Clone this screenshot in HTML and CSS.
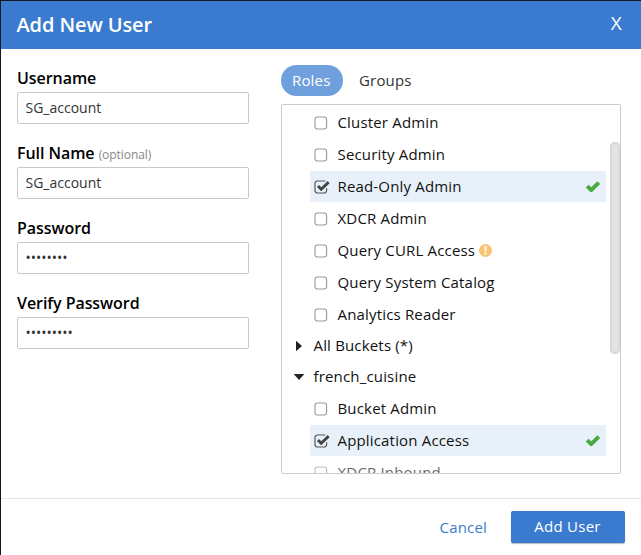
FILE: index.html
```
<!DOCTYPE html>
<html lang="en">
<head>
<meta charset="utf-8">
<title>Add New User</title>
<link rel="stylesheet" href="styles.css">
</head>
<body>
<svg class="defs" width="0" height="0">
  <symbol id="box" viewBox="0 0 16 14"><rect x="1" y="1" width="11.6" height="12" rx="2.5" fill="#fff" stroke="#999" stroke-width="1.1"/></symbol>
  <symbol id="boxed" viewBox="0 0 16 14"><path d="M12.6 8.2v2.3a2.5 2.5 0 0 1-2.5 2.5H3.5A2.5 2.5 0 0 1 1 10.500V3.500A2.500 2.500 0 0 1 3.500 1h6.600q.8 0 1.300.300" fill="none" stroke="#555" stroke-width="1.200"/><path d="M4 5.900l3.200 3.300 7.500-7.100" fill="none" stroke="#444" stroke-width="2.900"/></symbol>
  <symbol id="tick" viewBox="0 0 16 14"><path d="M2.200 6.200l4 4 7.600-7.600" fill="none" stroke="#4aa940" stroke-width="4" stroke-linejoin="round"/></symbol>
</svg>
<form class="dialog">
  <header class="head"><h1>Add New User</h1><span class="close">X</span></header>
  <main class="body">
    <section class="fields">
      <label class="field"><span class="label">Username</span><input type="text" value="SG_account"></label>
      <label class="field"><span class="label">Full Name <small>(optional)</small></span><input type="text" value="SG_account"></label>
      <label class="field"><span class="label">Password</span><span class="input secret">••••••••</span></label>
      <label class="field"><span class="label">Verify Password</span><span class="input secret">•••••••••</span></label>
    </section>
    <section class="access">
      <nav class="tabs"><span class="tab active">Roles</span><span class="tab">Groups</span></nav>
      <div class="list">
        <div class="role"><svg class="check"><use href="#box"/></svg><span>Cluster Admin</span></div>
        <div class="role"><svg class="check"><use href="#box"/></svg><span>Security Admin</span></div>
        <div class="role selected"><svg class="check"><use href="#boxed"/></svg><span>Read-Only Admin</span><svg class="tick"><use href="#tick"/></svg></div>
        <div class="role"><svg class="check"><use href="#box"/></svg><span>XDCR Admin</span></div>
        <div class="role"><svg class="check"><use href="#box"/></svg><span>Query CURL Access</span><svg class="warn" viewBox="0 0 13 13"><circle cx="6.500" cy="6.500" r="6.500" fill="#f8c373"/><path d="M5.400 2h2.200l-.3 5.600H5.700zM5.500 8.600h2v2h-2z" fill="#fff"/></svg></div>
        <div class="role"><svg class="check"><use href="#box"/></svg><span>Query System Catalog</span></div>
        <div class="role"><svg class="check"><use href="#box"/></svg><span>Analytics Reader</span></div>
        <div class="group"><svg class="caret" viewBox="0 0 12 12"><path d="M3 .7v10.600L9 6z" fill="#222"/></svg><span>All Buckets (*)</span></div>
        <div class="group"><svg class="caret" viewBox="0 0 12 12"><path d="M.7 3h10.600L6 9z" fill="#222"/></svg><span>french_cuisine</span></div>
        <div class="role"><svg class="check"><use href="#box"/></svg><span>Bucket Admin</span></div>
        <div class="role selected"><svg class="check"><use href="#boxed"/></svg><span>Application Access</span><svg class="tick"><use href="#tick"/></svg></div>
        <div class="role"><svg class="check"><use href="#box"/></svg><span>XDCR Inbound</span></div>
        <div class="fade"></div>
        <div class="thumb"></div>
      </div>
    </section>
  </main>
  <footer class="foot"><span class="cancel">Cancel</span><button type="button" class="submit">Add User</button></footer>
</form>
</body>
</html>
```
FILE: styles.css
```
* { box-sizing: border-box; }
body {
  margin: 0;
  height: 555px;
  padding: 1px 0 0 1px;
  overflow: hidden;
  background: #111827;
  font-family: "Open Sans", sans-serif;
  font-size: 15px;
  letter-spacing: .17px;
  color: #111;
}
.defs { position: absolute; }
.dialog {
  display: flex;
  flex-direction: column;
  height: 554px;
  background: #fff;
  border-radius: 2px 2px 0 0;
  overflow: hidden;
}
.head {
  display: flex;
  justify-content: space-between;
  align-items: center;
  height: 48px;
  padding: 0 19px 0 15.5px;
  background: #3a7bd0;
  color: #fff;
}
.head h1 { margin: 0; font-size: 20px; font-weight: 600; line-height: 48px; letter-spacing: -.1px; }
.close { font-size: 19px; line-height: 44px; height: 48px; }
.body { display: flex; height: 449px; padding: 16px 19px 0 16px; gap: 32px; }
.fields { width: 232px; }
.field { display: block; height: 75px; }
.label { display: block; height: 27px; line-height: 26px; font-size: 16px; font-weight: 600; letter-spacing: -.06px; color: #000; }
.label small { font-size: 12px; font-weight: 400; color: #888; }
input, .input {
  display: block;
  width: 232px;
  height: 32px;
  margin: 0;
  padding: 0 8px 1px 7.5px;
  border: 1px solid #c8c8c8;
  border-radius: 2px;
  background: #fff;
  font: 14px/30px "Open Sans", sans-serif;
  letter-spacing: 0;
  color: #333;
}
.access { width: 340px; }
.tabs { display: flex; height: 31px; }
.tab { height: 31px; padding: 0 16px; line-height: 30px; color: #333; }
.tab.active { width: 62px; padding: 0 11px; border-radius: 16px; background: #709fdd; color: #fff; }
.list {
  position: relative;
  height: 370px;
  margin-top: 8px;
  padding: 1px 14px 0 12px;
  border: 1px solid #ccc;
  border-radius: 2px;
  overflow: hidden;
}
.role, .group { display: flex; align-items: center; height: 31px; line-height: 31px; }
.role { margin: 1px 0 0 16px; padding: 0 5px 0 4px; }
.role.selected { background: #e8f1f9; }
.check { width: 16px; height: 14px; margin-right: 7.5px; }
.tick { width: 16px; height: 14px; margin-left: auto; }
.warn { width: 13px; height: 13px; margin-left: 4px; }
.caret { width: 12px; height: 12px; margin: 0 8.5px 0 -1px; }
.fade {
  position: absolute;
  left: 0; right: 0; bottom: 0;
  height: 16px;
  background: rgba(255, 255, 255, .35);
}
.thumb {
  position: absolute;
  top: 37px; right: 0;
  width: 10px; height: 212px;
  border-radius: 5px;
  background: #e4e4e4;
  box-shadow: inset 0 0 3px #bbb;
}
.foot {
  display: flex;
  justify-content: flex-end;
  align-items: flex-start;
  height: 57px;
  padding: 12px 16px 0;
  border-top: 1px solid #e5e5e5;
}
.cancel { padding-right: 24px; line-height: 32px; color: #3a7bd0; }
.submit {
  width: 114px;
  height: 32px;
  padding: 0 1px 1px 0;
  border: 0;
  border-radius: 2px;
  background: #3a7bd0;
  box-shadow: 0 1px 1px #bbb;
  color: #fff;
  font: 15px/31px "Open Sans", sans-serif;
  letter-spacing: .25px;
}
```
